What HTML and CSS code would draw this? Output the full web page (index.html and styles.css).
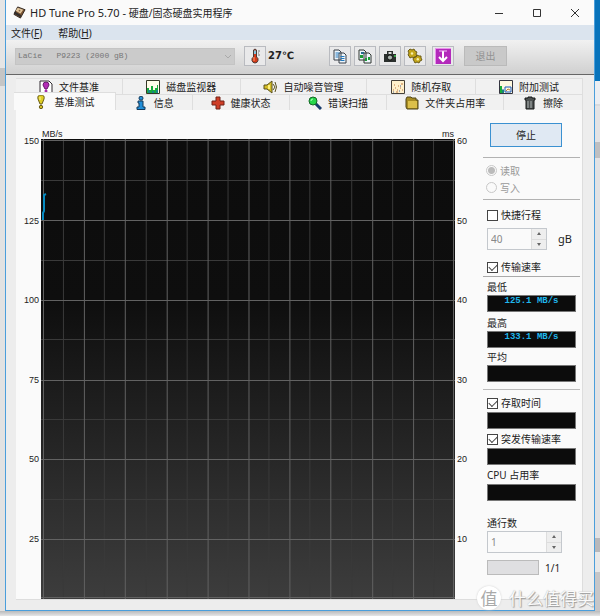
FILE: index.html
```html
<!DOCTYPE html>
<html lang="zh-CN">
<head>
<meta charset="utf-8">
<title>HD Tune Pro 5.70</title>
<link rel="stylesheet" href="styles.css">
</head>
<body>
<div class="desktop">
  <div class="edge edge-left"></div>
  <main class="window">
    <header class="titlebar">
      <svg class="logo" viewBox="0 0 14 14"><path d="M5 1l8 3-5 9-7-4z" fill="#7b5433" stroke="#2b211b"/><path d="M5 2l6 2-3 4-5-3z" fill="#e3c9a0"/><path d="M1 8l7 4 1-2-7-4z" fill="#312d2c"/><circle cx="7" cy="5" r="1" fill="#8b6844"/></svg>
      <h1>HD Tune Pro 5.70 - <span>硬盘/固态硬盘实用程序</span></h1>
      <div class="window-buttons">
        <button aria-label="最小化"><svg viewBox="0 0 10 10"><path d="M1 5.500h8"/></svg></button>
        <button aria-label="最大化"><svg viewBox="0 0 10 10"><path d="M1.500 1.500h7v7h-7z"/></svg></button>
        <button aria-label="关闭"><svg viewBox="0 0 10 10"><path d="M1 1l8 8M9 1L1 9"/></svg></button>
      </div>
    </header>
    <nav class="menu"><button>文件(<u>F</u>)</button><button>帮助(<u>H</u>)</button></nav>
    <div class="toolbar">
      <div class="drive">
        <select aria-label="驱动器" disabled><option>LaCie&nbsp;&nbsp;&nbsp;P9223 (2000 gB)</option></select>
        <svg viewBox="0 0 8 6"><path d="M1 1l3 3 3-3"/></svg>
      </div>
      <button class="tool" aria-label="温度"><svg viewBox="0 0 16 16"><path d="M6.500 2q1.500-2 3 0v7q2 1 1.500 3.500-.7 2.500-3 2.500t-3-2.500q-.5-2.500 1.500-3.500z" fill="#d43a18" stroke="#493a36"/><path d="M7 2.500h2V6H7z" fill="#82c3dc"/><path d="M7 9v4" stroke="#ff9a70"/><path d="M11 3h2M11 5h1M11 7h2" stroke="#777"/></svg></button>
      <output class="temperature">27℃</output>
      <div class="tools">
        <button class="tool" aria-label="复制文本"><svg viewBox="0 0 16 16"><path d="M2 2h5l2 2v8H2zM7 5h5l2 2v8H7z" fill="#eef6fc" stroke="#383f47"/><path d="M3.500 5h4M3.500 7h3M3.500 9h3M8.500 8.500h4M8.500 10.500h4M8.500 12.500h4" stroke="#2479bd"/></svg></button>
        <button class="tool" aria-label="复制图片"><svg viewBox="0 0 16 16"><path d="M2 2h5l2 2v8H2zM7 5h5l2 2v8H7z" fill="#eef6fc" stroke="#303630"/><path d="M3 7h3v3H3zM8 10h2v3H8zM11 9h2v3h-2z" fill="#1b9d36"/><path d="M4 4h3v2H4z" fill="#276a8c"/></svg></button>
        <button class="tool" aria-label="截图"><svg viewBox="0 0 16 16"><path d="M2 6h3V3h6v3h3v8H2z" fill="#2b302d"/><path d="M6.500 4h3v2h-3z" fill="#ddd"/><circle cx="8" cy="9.500" r="2.600" fill="#a9b4ad" stroke="#111"/><path d="M12 7h2v2h-2z" fill="#3aa347"/></svg></button>
        <button class="tool" aria-label="选项"><svg viewBox="0 0 16 16"><path d="M3 1l2 1 2-1 1 2 2 1-1 2 1 2-2 1-1 1-2-1-2 1-1-2-1-1 1-2-1-2zM10 7l2 1 2 0 0 2 1 2-2 1-1 2-2-1-2 1-1-2-1-2 1-2 2 0z" fill="#c5a719" stroke="#6c5c16"/><circle cx="5" cy="5.500" r="1.200" fill="#f7efaa"/><circle cx="10.800" cy="11.200" r="1.200" fill="#f7efaa"/></svg></button>
        <button class="tool save" aria-label="保存"><svg viewBox="0 0 16 16"><path d="M0 0h16v16H0z" fill="#b32abb"/><path d="M0 16V0h16" fill="none" stroke="#e992ec" stroke-width="2"/><path d="M8 3v10M4 9l4 4 4-4" fill="none" stroke="#fff" stroke-width="2"/><path d="M4 3h8" stroke="#f3c4f5"/></svg></button>
      </div>
      <button class="exit" disabled>退出</button>
    </div>
    <section class="content">
      <div class="tabs" role="tablist">
        <div class="tab-row upper">
          <button role="tab"><svg viewBox="0 0 14 14"><path d="M1 1h9l3 3v9H1z" fill="#fff" stroke="#302b31"/><path d="M7 2q3 0 3 3L8 9H6L4 5q0-3 3-3z" fill="#b32cb6" stroke="#661b6c"/><circle cx="7" cy="11" r="1.500" fill="#a229a7"/></svg>文件基准</button>
          <button role="tab"><svg viewBox="0 0 14 14"><path d="M.5.500h13v13H.5z" fill="#fffde9" stroke="#353827"/><path d="M1 13V8h2v2h2V6h2v4h2V8h2V5h1v8z" fill="#18ac3c"/><path d="M3 13v-3M7 13v-2M11 13v-3" stroke="#1765d1"/></svg>磁盘监视器</button>
          <button role="tab"><svg viewBox="0 0 14 14"><path d="M1 5h3l5-4v12L4 9H1z" fill="#d4bd26" stroke="#59511c"/><path d="M6 5v4" stroke="#fff17e" stroke-width="2"/><path d="M10 4l2 3-2 3M12 2l1.500 5-1.500 5" fill="none" stroke="#5a511c"/></svg>自动噪音管理</button>
          <button role="tab"><svg viewBox="0 0 14 14"><path d="M.5.500h13v13H.5z" fill="#fff0cb" stroke="#454039"/><path d="M2 10h1M4 8h1M3 5h1M6 10h1M7 6h1M9 8h1M10 4h2M11 10h1M5 12h2" stroke="#bd7640"/><path d="M2 12h1M8 11h1M9 6h1" stroke="#42609b"/></svg>随机存取</button>
          <button role="tab"><svg viewBox="0 0 14 14"><path d="M.5.500h13v13H.5z" fill="#fff8df" stroke="#353540"/><path d="M1 13V6h2v4h2v3z" fill="#18ad37"/><path d="M4 13V9M6 7h6v5H6z" fill="none" stroke="#1959bf"/><path d="M7 11l2-2 2 1" fill="none" stroke="#c28136"/></svg>附加测试</button>
        </div>
        <div class="tab-row lower">
          <button role="tab" class="active" aria-selected="true"><svg viewBox="0 0 14 14"><path d="M7 0q4 0 3 4L8 9H6L4 4q-1-4 3-4z" fill="#dfce24" stroke="#695d18"/><path d="M6 2v3" stroke="#fff6a0"/><circle cx="7" cy="12" r="1.700" fill="#d4bd20" stroke="#695d18"/></svg>基准测试</button>
          <button role="tab"><svg viewBox="0 0 14 14"><circle cx="7" cy="2.200" r="2" fill="#218ed8" stroke="#123859"/><path d="M4 5h5v6h2v2.500H3V11h2V7H4z" fill="#218ed8" stroke="#123859"/></svg>信息</button>
          <button role="tab"><svg viewBox="0 0 14 14"><path d="M5 1h4v4h4v4H9v4H5V9H1V5h4z" fill="#cf3e27" stroke="#712319"/></svg>健康状态</button>
          <button role="tab"><svg viewBox="0 0 14 14"><path d="M7 7l6 6" stroke="#173b6c" stroke-width="3"/><circle cx="5" cy="5" r="4" fill="#25d649" stroke="#156727"/><path d="M3 5q0-2 2-2" fill="none" stroke="#b6ffbd"/></svg>错误扫描</button>
          <button role="tab"><svg viewBox="0 0 14 14"><path d="M1 3l1-2h4l1 1h4v2h2v9H2L1 11z" fill="#a68b22" stroke="#514619"/><path d="M3 5h9v7H3z" fill="#dcc04a"/></svg>文件夹占用率</button>
          <button role="tab"><svg viewBox="0 0 14 14"><path d="M2 2h3V1h4v1h3v2h-1v9H3V4H2z" fill="#4d5151" stroke="#171919"/><path d="M5 5v7M8 5v7" stroke="#afb6b5"/></svg>擦除</button>
        </div>
      </div>
      <div class="panel">
        <figure class="chart">
          <div class="units"><span>MB/s</span><span>ms</span></div>
          <div class="axis left"><span>150</span><span>125</span><span>100</span><span>75</span><span>50</span><span>25</span></div>
          <svg class="plot" viewBox="0 0 415 460" preserveAspectRatio="none" role="img" aria-label="传输速率">
            <defs><linearGradient id="shade" x1="0" y1="0" x2="0" y2="1"><stop offset="0" stop-color="#0c0c0c"/><stop offset=".35" stop-color="#0e0e0e"/><stop offset="1" stop-color="#3d3d3d"/></linearGradient></defs>
            <rect width="415" height="460" fill="url(#shade)"/>
            <path class="minor" d="M22.500 0v460M63.500 0v460M105.500 0v460M146.500 0v460M187.500 0v460M228.500 0v460M269.500 0v460M311.500 0v460M352.500 0v460M393.500 0v460M0 41.500h415M0 121.500h415M0 200.500h415M0 280.500h415M0 360.500h415M0 439.500h415"/>
            <path class="major" d="M2.500 0v460M43.500 0v460M84.500 0v460M126.500 0v460M167.500 0v460M208.500 0v460M249.500 0v460M290.500 0v460M332.500 0v460M373.500 0v460M413.500 0v460M0 1.500h415M0 81.500h415M0 161.500h415M0 241.500h415M0 320.500h415M0 400.500h415M0 458.500h415"/>
            <path class="trace" d="M2 81V74l1-2V56l2-1"/>
          </svg>
          <div class="axis right"><span>60</span><span>50</span><span>40</span><span>30</span><span>20</span><span>10</span></div>
        </figure>
        <aside class="controls">
          <button class="stop">停止</button>
          <fieldset class="mode" disabled>
            <label><input type="radio" name="mode" checked>读取</label>
            <label><input type="radio" name="mode">写入</label>
          </fieldset>
          <div class="short-stroke">
            <label class="check"><input type="checkbox">快捷行程</label>
            <div class="field-row">
              <div class="spinner"><input type="text" aria-label="容量" value="40" disabled><div class="steps"><button class="up" aria-label="增加"></button><button class="down" aria-label="减少"></button></div></div>
              <span class="gb">gB</span>
            </div>
          </div>
          <label class="check transfer"><input type="checkbox" checked>传输速率</label>
          <div class="rates">
            <label for="min">最低</label><output id="min">125.1 MB/s</output>
            <label for="max">最高</label><output id="max">133.1 MB/s</output>
            <label for="avg">平均</label><output id="avg"></output>
          </div>
          <div class="extras">
            <label class="check"><input type="checkbox" checked>存取时间</label><output aria-label="存取时间"></output>
            <label class="check"><input type="checkbox" checked>突发传输速率</label><output aria-label="突发传输速率"></output>
            <label for="cpu">CPU 占用率</label><output id="cpu"></output>
          </div>
          <div class="passes">
            <label for="passes">通行数</label>
            <div class="spinner wide"><input id="passes" type="text" value="1" disabled><div class="steps"><button class="up" aria-label="增加"></button><button class="down" aria-label="减少"></button></div></div>
            <div class="progress-row"><div class="progress" role="progressbar" aria-label="进度"></div><span>1/1</span></div>
          </div>
        </aside>
      </div>
    </section>
  </main>
  <div class="edge edge-right"></div>
  <div class="watermark"><b>值</b><span>什么值得买</span></div>
</div>
</body>
</html>
```
FILE: styles.css
```css
* { box-sizing: border-box; }

body {
  margin: 0;
  color: #222;
  background: #e4e4e5;
  font: 10px/14px "Noto Sans", "Noto Sans CJK SC", sans-serif;
}

button, input, select { margin: 0; font: inherit; color: inherit; }
button { padding: 0; border: 0; background: none; }
svg { display: block; }

.desktop {
  position: relative;
  display: flex;
  min-height: 100vh;
  padding-bottom: 5px;
  background: linear-gradient(to top, #e6e6e6, #b9babc 5px, #e4e4e5 5px);
}
.edge { flex: 0 0 5px; }
.edge-left { background: linear-gradient(#e5e5e5 68px, #c5c5c5 68px 86px, #e2e2e2 86px); }
.edge-right { background: linear-gradient(#0873bb 81px, #eceef2 81px 104px, #d9dadd 104px 106px, #e3e3e5 106px 142px, #bfbfc1 142px 158px, #e2e2e4 158px 538px, #b8b8bb 538px 552px, #e8e8e8 552px 572px, #c6c6c8 572px); }

.window {
  flex: 1;
  min-width: 0;
  display: flex;
  flex-direction: column;
  border: solid #4b9edb;
  border-width: 0 1px 1px;
  background: #ededed;
}

.titlebar {
  display: flex;
  align-items: center;
  height: 25px;
  padding-left: 7px;
  background: #fafafa;
}
.logo { width: 13px; height: 13px; margin-right: 4px; }
h1 { margin: 0; font-size: 11px; font-weight: 400; line-height: 16px; }
h1 span { font-size: 10px; }
.window-buttons { display: flex; margin-left: auto; }
.window-buttons button { width: 38px; height: 24px; display: grid; place-items: center; }
.window-buttons svg { width: 10px; height: 10px; fill: none; stroke: #333; }

.menu { display: flex; gap: 16px; height: 15px; padding-left: 5px; background: #dbe4ee; }

.toolbar {
  display: flex;
  align-items: center;
  height: 35px;
  padding: 0 87px 2px 9px;
  border-bottom: 1px solid #666;
  background: linear-gradient(#f1f1f1, #d0d0d0);
}
.drive { position: relative; flex: 1; max-width: 220px; }
.drive select {
  display: block;
  width: 100%;
  height: 17px;
  padding: 0 2px;
  appearance: none;
  border: 1px solid #c4c4c4;
  border-radius: 0;
  background: #cbcbcb;
  color: #777;
  opacity: 1;
  font: 8px/14px "Liberation Mono", monospace;
}
.drive svg { position: absolute; right: 3px; top: 6px; width: 8px; height: 6px; fill: none; stroke: #aaa; }
.tool {
  display: grid;
  place-items: center;
  width: 22px;
  height: 20px;
  border: 1px solid #b9bbc0;
  background: #e9e9ea;
}
.tool svg { width: 16px; height: 16px; }
.drive + .tool { margin-left: 9px; }
.temperature { margin-left: 2px; font: bold 10px/16px "DejaVu Sans", "Noto Sans CJK SC", sans-serif; }
.tools { display: flex; gap: 3px; margin-left: auto; }
.save { margin-left: 3px; }
.exit { width: 43px; height: 20px; margin-left: 10px; border: 1px solid #bababa; background: #c9c9c9; color: #929292; }

.content { flex: 1; display: flex; flex-direction: column; padding: 3px 11px 10px 10px; }
.tab-row { display: grid; height: 16px; }
.upper { grid-template-columns: 107fr 118fr 127fr 109fr 107fr; }
.lower { grid-template-columns: 100fr 77fr 97fr 98fr 117fr 79fr; }
.tab-row button {
  display: flex;
  align-items: center;
  justify-content: center;
  gap: 6px;
  border: 1px solid #dedede;
  border-width: 1px 1px 0 0;
  background: #f1f1f1;
  white-space: nowrap;
}
.tab-row svg { width: 14px; height: 14px; }
.tab-row .active { margin: -2px 0 0 -2px; background: #fafafa; }

.panel { flex: 1; display: flex; background: #fafafa; border-right: 1px solid #ddd; border-bottom: 1px solid #ddd; }
.chart {
  flex: 1;
  min-width: 0;
  display: grid;
  grid-template: 29px 1fr / 25px 1fr 24px;
  margin: 0;
  font: 9px/12px "Liberation Sans", sans-serif;
}
.units { grid-column: 2; display: flex; justify-content: space-between; align-items: flex-end; padding: 0 1px; line-height: 10px; }
.axis { grid-row: 2; display: flex; flex-direction: column; justify-content: space-between; margin-top: -4px; padding-bottom: 54px; }
.left { grid-column: 1; text-align: right; padding-right: 2px; }
.right { grid-column: 3; padding-left: 2px; }
.plot { grid-area: 2 / 2; width: 100%; height: 0; min-height: 100%; }
.plot path { fill: none; vector-effect: non-scaling-stroke; }
.plot .minor { stroke: #3a3a3a; }
.plot .major { stroke: #626262; }
.plot .trace { stroke: #078bc1; stroke-width: 2px; }

.controls { flex: 0 0 103px; padding: 13px 2px 0 4px; }
.stop {
  display: block;
  width: 72px;
  height: 24px;
  margin: 0 0 10px 7px;
  border: 1px solid #3b91d1;
  background: #e0e9f3;
}
.mode { margin: 0; padding: 4px 3px 3px; border: solid #b2b2b2; border-width: 1px 0; color: #999; }
.mode label { display: flex; align-items: center; gap: 3px; height: 17px; }
.mode input {
  width: 11px;
  height: 11px;
  appearance: none;
  border: 1px solid #c8c8c8;
  border-radius: 50%;
  background: #fafafa;
}
.mode input:checked { background: radial-gradient(#bbb 3px, #fafafa 4px); }
.check { display: flex; align-items: center; gap: 3px; }
.check input {
  display: grid;
  place-items: center;
  width: 11px;
  height: 11px;
  appearance: none;
  border: 1px solid #444;
  background: #fff;
}
.check input:checked::before {
  content: "";
  width: 7px;
  height: 4px;
  margin-bottom: 2px;
  border: solid #444;
  border-width: 0 0 1px 1px;
  transform: rotate(-45deg);
}
.short-stroke { padding: 8px 4px 0; }
.field-row { display: flex; align-items: center; gap: 11px; margin-top: 6px; }
.gb { font-size: 11px; }
.spinner { display: flex; width: 60px; height: 22px; border: 1px solid #c4c8cd; background: #fafafa; }
.spinner input { flex: 1; min-width: 0; padding: 0 3px; border: 0; background: none; color: #888; }
.steps { display: grid; width: 15px; border-left: 1px solid #ddd; background: #eee; }
.steps button { display: grid; place-items: center; }
.steps button + button { border-top: 1px solid #ddd; }
.steps button::before { content: ""; border: 2px solid transparent; }
.steps .up::before { border-top: 0; border-bottom: 3px solid #666; }
.steps .down::before { border-bottom: 0; border-top: 3px solid #666; }
.transfer { margin-top: 10px; padding: 0 4px 2px; border-bottom: 1px solid #aaa; }
.rates { padding: 2px 4px 6px; border-bottom: 1px solid #bbb; }
.rates label, .extras > label, .passes label { display: flex; height: 16px; align-items: center; }
.controls output {
  display: block;
  height: 17px;
  border: 1px solid #777;
  background: #0c0c0c;
  color: #20b7ec;
  text-align: center;
  font: bold 9px/10px "Liberation Mono", monospace;
}
.rates output { margin-bottom: 1px; }
.rates #min { margin-bottom: 3px; }
.extras { padding: 5px 4px 0; }
.extras output { margin: 1px 0 2px; }
.passes { padding: 12px 4px 0; }
.wide { width: 75px; }
.progress-row { display: flex; align-items: center; gap: 6px; margin-top: 7px; }
.progress { width: 52px; height: 15px; border: 1px solid #bbb; background: #dfdfe1; }

.watermark {
  position: absolute;
  right: 6px;
  bottom: 6px;
  display: flex;
  align-items: center;
  gap: 8px;
  color: #fafafa;
  font: 17px/24px "Noto Sans CJK SC", sans-serif;
  text-shadow: 1px 1px 1px #999, 0 0 1px #aaa;
}
.watermark b { width: 24px; height: 24px; border-radius: 50%; background: #fff; color: #aaa; font-weight: 400; text-align: center; text-shadow: none; box-shadow: 0 0 2px #ccc; }
```
